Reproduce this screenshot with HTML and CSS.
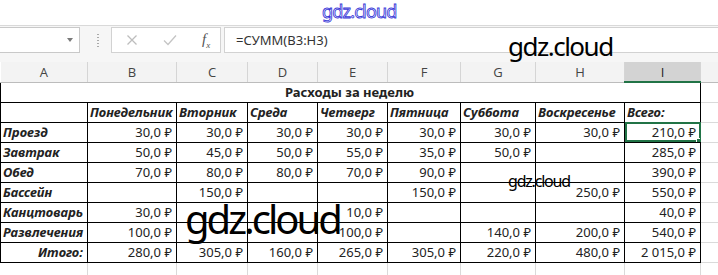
FILE: index.html
```html
<!DOCTYPE html>
<html lang="ru">
  <head>
    <meta charset="UTF-8" />
    <meta name="viewport" content="width=device-width, initial-scale=1.0" />
    <title>Расходы за неделю</title>
    <link rel="stylesheet" href="styles.css">
  </head>
  <body>
    <div class="page">
      <div class="top-strip"></div>

      <div class="formula-bar">
        <div class="name-box"><span class="caret"></span></div>
        <div class="grip"></div>
        <div class="fx-box">
          <svg class="tool" width="12" height="12" viewBox="0 0 12 12">
            <path d="M1.5 1.5 L10.5 10.5 M10.5 1.5 L1.5 10.5" stroke="#bdbdbd" stroke-width="1.3" fill="none"/>
          </svg>
          <svg class="tool" width="14" height="12" viewBox="0 0 14 12">
            <path d="M1 6.5 L5 10.5 L13 1.5" stroke="#c4c4c4" stroke-width="1.3" fill="none"/>
          </svg>
          <span class="fx"><i>f</i><sub>x</sub></span>
        </div>
        <div class="formula">=СУММ(B3:H3)</div>
      </div>

      <table class="sheet">
        <colgroup>
          <col class="col-a"><col class="col-b"><col class="col-c"><col class="col-d"><col class="col-e">
          <col class="col-f"><col class="col-g"><col class="col-h"><col class="col-i"><col class="col-j">
        </colgroup>
        <tr class="heads">
          <th>A</th><th>B</th><th>C</th><th>D</th><th>E</th><th>F</th><th>G</th><th>H</th><th class="active">I</th><th></th>
        </tr>
        <tr>
          <td class="title" colspan="9">Расходы за неделю</td><td class="grid"></td>
        </tr>
        <tr class="box">
          <td></td>
          <td class="day">Понедельник</td><td class="day">Вторник</td><td class="day">Среда</td><td class="day">Четверг</td>
          <td class="day">Пятница</td><td class="day">Суббота</td><td class="day">Воскресенье</td><td class="day">Всего:</td>
          <td class="grid"></td>
        </tr>
        <tr class="box">
          <td class="lbl">Проезд</td>
          <td class="num">30,0 ₽</td><td class="num">30,0 ₽</td><td class="num">30,0 ₽</td><td class="num">30,0 ₽</td>
          <td class="num">30,0 ₽</td><td class="num">30,0 ₽</td><td class="num">30,0 ₽</td>
          <td class="num selected">210,0 ₽<span class="handle"></span></td>
          <td class="grid"></td>
        </tr>
        <tr class="box">
          <td class="lbl">Завтрак</td>
          <td class="num">50,0 ₽</td><td class="num">45,0 ₽</td><td class="num">50,0 ₽</td><td class="num">55,0 ₽</td>
          <td class="num">35,0 ₽</td><td class="num">50,0 ₽</td><td class="num"></td><td class="num">285,0 ₽</td>
          <td class="grid"></td>
        </tr>
        <tr class="box">
          <td class="lbl">Обед</td>
          <td class="num">70,0 ₽</td><td class="num">80,0 ₽</td><td class="num">80,0 ₽</td><td class="num">70,0 ₽</td>
          <td class="num">90,0 ₽</td><td class="num"></td><td class="num"></td><td class="num">390,0 ₽</td>
          <td class="grid"></td>
        </tr>
        <tr class="box">
          <td class="lbl">Бассейн</td>
          <td class="num"></td><td class="num">150,0 ₽</td><td class="num"></td><td class="num"></td>
          <td class="num">150,0 ₽</td><td class="num"></td><td class="num">250,0 ₽</td><td class="num">550,0 ₽</td>
          <td class="grid"></td>
        </tr>
        <tr class="box">
          <td class="lbl">Канцтоварь</td>
          <td class="num">30,0 ₽</td><td class="num"></td><td class="num"></td><td class="num">10,0 ₽</td>
          <td class="num"></td><td class="num"></td><td class="num"></td><td class="num">40,0 ₽</td>
          <td class="grid"></td>
        </tr>
        <tr class="box">
          <td class="lbl">Развлечения</td>
          <td class="num">100,0 ₽</td><td class="num"></td><td class="num"></td><td class="num">100,0 ₽</td>
          <td class="num"></td><td class="num">140,0 ₽</td><td class="num">200,0 ₽</td><td class="num">540,0 ₽</td>
          <td class="grid"></td>
        </tr>
        <tr class="box">
          <td class="lbl total">Итого:</td>
          <td class="num">280,0 ₽</td><td class="num">305,0 ₽</td><td class="num">160,0 ₽</td><td class="num">265,0 ₽</td>
          <td class="num">305,0 ₽</td><td class="num">220,0 ₽</td><td class="num">480,0 ₽</td><td class="num">2 015,0 ₽</td>
          <td class="grid"></td>
        </tr>
        <tr class="empty">
          <td></td><td></td><td></td><td></td><td></td><td></td><td></td><td></td><td></td><td></td>
        </tr>
      </table>

      <span class="mark mark-top">gdz.cloud</span>
      <span class="mark mark-mid">gdz.cloud</span>
      <span class="mark mark-small">gdz.cloud</span>
      <span class="mark mark-big">gdz.cloud</span>
    </div>
  </body>
</html>
```

FILE: styles.css
```css
body {
  margin: 0;
  padding: 0;
  background-color: #fff;
  font-family: "Noto Sans", "DejaVu Sans", sans-serif;
  color: #222;
  overflow: hidden;
}

.page {
  position: relative;
  width: 718px;
  height: 275px;
  overflow: hidden;
}

.top-strip {
  height: 25px;
  border-bottom: 1px solid #d9d9d9;
}

/* formula bar */
.formula-bar {
  display: flex;
  align-items: flex-start;
  height: 36px;
  padding-top: 1px;
  box-sizing: border-box;
  background-color: #f6f6f6;
}

.name-box {
  position: relative;
  width: 80px;
  height: 26px;
  box-sizing: border-box;
  background-color: #fff;
  border: 1px solid #c9c9c9;
  border-left: none;
}

.caret {
  position: absolute;
  left: 67px;
  top: 10px;
  border-left: 3px solid transparent;
  border-right: 3px solid transparent;
  border-top: 4px solid #7a7a7a;
}

.grip {
  width: 2px;
  height: 13px;
  margin: 7px 12px 0 17px;
  background: repeating-linear-gradient(#aaa 0 1px, transparent 1px 3px);
}

.fx-box {
  display: flex;
  align-items: center;
  width: 110px;
  height: 26px;
  box-sizing: border-box;
  background-color: #fff;
  border: 1px solid #d2d2d2;
  padding-left: 14px;
  gap: 25px;
}

.fx {
  font-family: "Liberation Serif", serif;
  font-size: 15px;
  color: #555;
}

.fx sub {
  font-size: 9px;
  font-style: italic;
}

.formula {
  flex: 1;
  height: 26px;
  margin-left: 3px;
  box-sizing: border-box;
  background-color: #fff;
  border: 1px solid #d2d2d2;
  border-right: none;
  padding-left: 11px;
  font-size: 13px;
  line-height: 24px;
  color: #333;
}

/* sheet */
.sheet {
  border-collapse: collapse;
  table-layout: fixed;
  width: 718px;
  font-family: "Noto Sans", "DejaVu Sans", sans-serif;
  font-size: 13px;
}

.col-a { width: 87px; }
.col-b { width: 89px; }
.col-c { width: 71px; }
.col-d { width: 70px; }
.col-e { width: 70px; }
.col-f { width: 73px; }
.col-g { width: 75px; }
.col-h { width: 89px; }
.col-i { width: 76px; }
.col-j { width: 18px; }

.sheet tr {
  height: 20px;
}

.sheet td {
  padding: 0 4px 0 2px;
  white-space: nowrap;
  overflow: hidden;
  line-height: 18px;
}

.heads th {
  background-color: #f3f3f3;
  color: #444;
  font-family: "Open Sans", "Noto Sans", sans-serif;
  font-weight: normal;
  font-size: 13px;
  border-right: 1px solid #d5d5d5;
  border-bottom: 1px solid #bcbcbc;
  padding: 0;
}

.heads th.active {
  background-color: #d3d3d3;
  color: #222;
  border-bottom: 2px solid #217346;
}

.title {
  text-align: center;
  font-weight: bold;
  border-left: 1px solid #000;
  border-right: 1px solid #000;
}

.box td {
  border: 1px solid #000;
}

.box td.grid,
.sheet td.grid {
  border: none;
  border-bottom: 1px solid #dadada;
}

.day {
  font-weight: bold;
  font-style: italic;
}

.lbl {
  font-weight: bold;
  font-style: italic;
}

.lbl.total {
  text-align: right;
}

.num {
  text-align: right;
}

.box td.selected {
  position: relative;
  outline: 2px solid #217346;
  outline-offset: -2px;
}

.handle {
  position: absolute;
  right: -3px;
  bottom: -3px;
  width: 5px;
  height: 5px;
  background-color: #217346;
  border: 1px solid #fff;
}

.empty td {
  border-right: 1px solid #dadada;
}

/* watermarks */
.mark {
  position: absolute;
  white-space: nowrap;
  color: #000;
  line-height: 1.2;
}

.mark-top {
  left: 322px;
  top: 1px;
  font-size: 18px;
  letter-spacing: -0.8px;
  color: #fff;
  -webkit-text-stroke: 0.9px #3b3bd9;
}

.mark-mid {
  left: 508px;
  top: 31px;
  font-size: 26px;
  letter-spacing: -1.5px;
}

.mark-small {
  left: 508px;
  top: 172px;
  font-size: 16px;
  letter-spacing: -1.2px;
}

.mark-big {
  left: 185px;
  top: 195px;
  font-size: 40px;
  letter-spacing: -3px;
}
```
